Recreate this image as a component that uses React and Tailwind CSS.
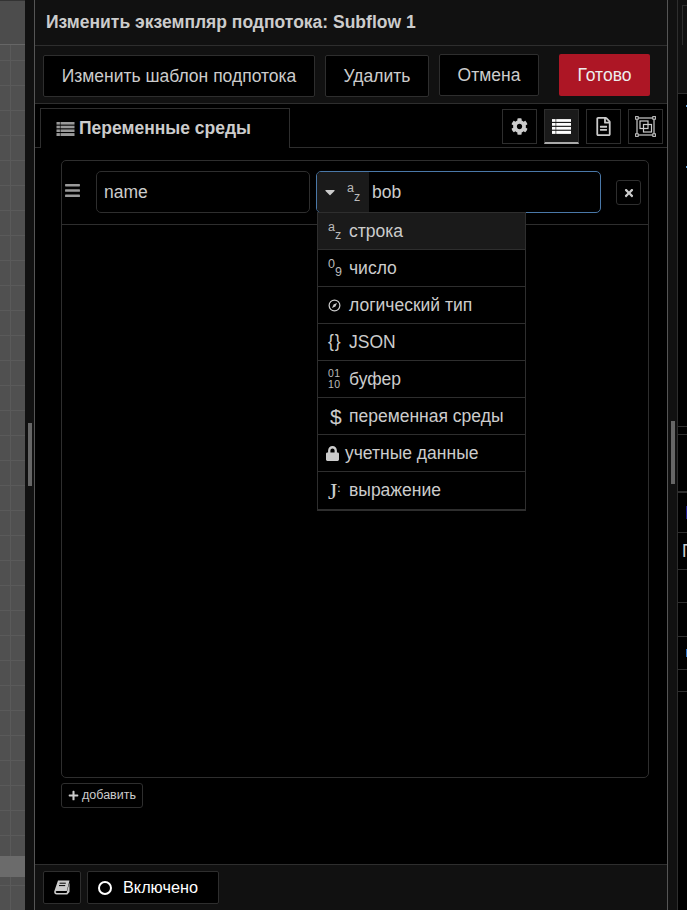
import React from "react";
import { FaCog, FaRegFileAlt, FaPlus, FaTimes, FaLock, FaBars, FaCaretDown } from "react-icons/fa";

const ListIcon = ({ className }) => (
  <svg viewBox="0 0 18 14" className={className} fill="currentColor">
    <rect x="0" y="0" width="3.4" height="2.6" /><rect x="4" y="0" width="14" height="2.6" />
    <rect x="0" y="3.7" width="3.4" height="2.6" /><rect x="4" y="3.7" width="14" height="2.6" />
    <rect x="0" y="7.4" width="3.4" height="2.6" /><rect x="4" y="7.4" width="14" height="2.6" />
    <rect x="0" y="11.1" width="3.4" height="2.9" /><rect x="4" y="11.1" width="14" height="2.9" />
  </svg>
);

const GroupIcon = () => (
  <svg viewBox="0 0 21 21" className="w-[21px] h-[21px] text-[#cccccc]" fill="none" stroke="currentColor" strokeWidth="1.2">
    <rect x="2" y="2" width="17" height="17" />
    <rect x="5" y="5" width="8" height="7.5" />
    <rect x="8.5" y="8.5" width="8" height="7.5" />
    <g fill="#000000" strokeWidth="1">
      <rect x="0.6" y="0.6" width="2.6" height="2.6" /><rect x="17.8" y="0.6" width="2.6" height="2.6" />
      <rect x="0.6" y="17.8" width="2.6" height="2.6" /><rect x="17.8" y="17.8" width="2.6" height="2.6" />
    </g>
  </svg>
);

const BookIcon = () => (
  <svg viewBox="0 0 16 15" className="w-4 h-[15px] text-[#cccccc]">
    <path d="M4 0.5 H15.5 L12.8 11 H2.8 Q1.6 11 1.7 12 Q1.8 13 3 13 H12.6 L15.5 2.5 V12 L13.3 14.5 H2.8 Q0 14.5 0.2 11.5 Z" fill="currentColor" />
    <path d="M5.6 3.2 H11.8 M5 5.6 H11.2" stroke="#000000" strokeWidth="1" />
  </svg>
);

const Az = ({ a, z, dy = "top-[8px]" }) => (
  <span className="relative block w-[15px] h-[20px] text-[#bbbbbb] text-[12.5px] leading-none">
    <span className="absolute left-0 top-0">{a}</span>
    <span className={`absolute left-[7px] ${dy}`}>{z}</span>
  </span>
);

const BoolIcon = () => (
  <svg viewBox="0 0 14 14" className="w-[13px] h-[13px] text-[#cccccc]" fill="none" stroke="currentColor">
    <circle cx="7" cy="7" r="5.8" strokeWidth="1.3" />
    <path d="M4.3 9.7 L6 6 L9.7 4.3 L8 8 Z" fill="currentColor" stroke="none" />
  </svg>
);

const Row = ({ icon, label, active, tight }) => (
  <div className={`h-[37px] flex items-center border-b border-[#2e2e2e] ${active ? "bg-[#1a1a1a]" : ""} ${tight ? "pl-2 gap-[6px]" : "pl-[10px]"}`}>
    <span className={tight ? "flex w-[13px] justify-center" : "flex w-[21px] shrink-0 items-center"}>{icon}</span>
    <span className="text-[#cccccc]">{label}</span>
  </div>
);

const TopBtn = ({ children, className }) => (
  <button className={`h-[42px] rounded-[2px] flex items-center justify-center ${className}`}>{children}</button>
);

const IconTab = ({ children, active }) => (
  <div className={`w-[35px] h-[35px] flex items-center justify-center border border-[#2e2e2e] ${active ? "bg-[#1a1a1a] border-b-2 border-b-[#aaaaaa]" : "bg-black"}`}>{children}</div>
);

const SideRow = ({ h, children, className = "" }) => (
  <div className={`shrink-0 border-b border-[#2e2e2e] overflow-hidden ${className}`} style={{ height: h }}>{children}</div>
);

export default function App() {
  return (
    <div className="flex h-[910px] w-[687px] overflow-hidden bg-black text-[17.5px] font-['Liberation_Sans',Arial,sans-serif]">
      {/* canvas */}
      <div className="w-[25px] shrink-0 flex flex-col bg-[#505050] bg-[linear-gradient(#5a5a5a_1px,transparent_1px),linear-gradient(90deg,#5a5a5a_1px,transparent_1px)] bg-[size:25px_25px] bg-[position:10px_10px]">
        <div className="h-[45px] shrink-0 bg-[#4c4c4c] border-t border-[#333333] border-b border-b-[#666666]" />
        <div className="h-[811px] shrink-0" />
        <div className="h-[21px] shrink-0 bg-[#6b6b6b]" />
      </div>
      {/* left separator */}
      <div className="w-[9px] shrink-0 bg-[#111111] flex items-start justify-center pt-[423px]">
        <div className="w-1 h-[63px] bg-[#666666]" />
      </div>

      {/* tray */}
      <div className="w-[634px] shrink-0 flex flex-col border-x border-[#555555] bg-black">
        <div className="h-[46px] shrink-0 bg-[#111111] border-b border-[#2e2e2e] pl-[11px] flex items-center font-bold text-[#cccccc]">
          Изменить экземпляр подпотока: Subflow 1
        </div>
        <div className="h-[58px] shrink-0 bg-[#111111] border-b border-[#2e2e2e] pl-2 pt-2 flex items-start text-[#cccccc]">
          <TopBtn className="w-[272px] mt-px bg-black border border-[#2e2e2e]">Изменить шаблон подпотока</TopBtn>
          <TopBtn className="w-[104px] mt-px ml-[10px] bg-black border border-[#2e2e2e]">Удалить</TopBtn>
          <TopBtn className="w-[100px] ml-[10px] bg-black border border-[#2e2e2e]">Отмена</TopBtn>
          <TopBtn className="w-[91px] ml-5 bg-[#ad1625] text-[#eeeeee]">Готово</TopBtn>
        </div>
        <div className="h-[44px] shrink-0 border-b border-[#2e2e2e] flex items-end justify-between pl-[5px] pr-[4px] bg-black">
          <div className="w-[250px] h-[40px] -mb-px bg-black border border-b-0 border-[#2e2e2e] flex items-center pl-[15px] gap-[4px] font-bold text-[#cccccc]">
            <ListIcon className="w-[19px] h-[14px] text-[#999999]" />
            Переменные среды
          </div>
          <div className="flex gap-[7px] self-start pt-[5px]">
            <IconTab><FaCog className="w-[17px] h-[17px] text-[#cccccc]" /></IconTab>
            <IconTab active><ListIcon className="w-[19px] h-[15px] text-white" /></IconTab>
            <IconTab><FaRegFileAlt className="w-[15px] h-[19px] text-[#cccccc]" /></IconTab>
            <IconTab><GroupIcon /></IconTab>
          </div>
        </div>

        <div className="flex-1 min-h-0 flex flex-col pl-[26px] pt-[12px]">
          <div className="w-[588px] h-[618px] shrink-0 border border-[#2e2e2e] rounded-[5px] flex flex-col">
            <div className="relative h-[64px] shrink-0 border-b border-[#2e2e2e] flex items-center pl-[2px]">
              <FaBars className="w-[17px] h-[17px] text-[#999999] mb-[4px]" />
              <div className="ml-[15px] mb-[2px] w-[214px] h-[42px] rounded-[5px] border border-[#2e2e2e] flex items-center pl-[7px] pt-px text-[#cccccc]">name</div>
              <div className="ml-[6px] mb-[2px] w-[285px] h-[42px] rounded-[5px] border border-[#4a78a8] flex items-center overflow-hidden text-[#cccccc]">
                <div className="w-[52px] h-full bg-[#1a1a1a] flex items-center pl-[5px] gap-[9px] shrink-0">
                  <FaCaretDown className="w-[16px] h-[16px] text-[#cccccc]" />
                  <Az a="a" z="z" dy="top-[9px]" />
                </div>
                <span className="ml-[3px] pt-px">bob</span>
              </div>
              <button className="ml-[15px] w-[25px] h-[25px] rounded-[3px] border border-[#2e2e2e] bg-black flex items-center justify-center">
                <FaTimes className="w-[12px] h-[12px] text-[#cccccc]" />
              </button>
              {/* dropdown menu */}
              <div className="absolute left-[255px] top-[51px] z-10 w-[209px] bg-black border border-[#2e2e2e] border-b-2">
                <Row active icon={<Az a="a" z="z" />} label="строка" />
                <Row icon={<Az a="0" z="9" />} label="число" />
                <Row icon={<BoolIcon />} label="логический тип" />
                <Row icon={<span className="text-[#cccccc] leading-none tracking-[1px]">{"{}"}</span>} label="JSON" />
                <Row icon={<span className="block w-[14px] text-[#bbbbbb] text-[10.5px] leading-[11px] tracking-[0.5px]"><span className="block">01</span><span className="block">10</span></span>} label="буфер" />
                <Row icon={<span className="text-[#cccccc] text-[21px] leading-none pl-[2px]">$</span>} label="переменная среды" />
                <Row tight icon={<FaLock className="w-[13px] h-[15px] text-[#cccccc]" />} label="учетные данные" />
                <div className="h-[37px] flex items-center pl-[10px]">
                  <span className="flex w-[21px] shrink-0 items-center text-[#cccccc] text-[24px] leading-none font-['Liberation_Serif',serif]">J<span className="text-[12px] -mt-[6px]">:</span></span>
                  <span className="text-[#cccccc]">выражение</span>
                </div>
              </div>
            </div>
          </div>
          <button className="mt-[5px] w-[82px] h-[25px] rounded-[3px] border border-[#2e2e2e] bg-black flex items-center justify-center gap-[3px] text-[12.5px] text-[#cccccc]">
            <FaPlus className="w-[11px] h-[11px] text-[#cccccc]" />добавить
          </button>
        </div>

        <div className="h-[46px] shrink-0 bg-[#111111] border-t border-[#2e2e2e] flex items-start pl-2 pt-[6px] gap-[6px]">
          <div className="w-[38px] h-[33px] rounded-[2px] bg-black border border-[#2e2e2e] flex items-center justify-center">
            <BookIcon />
          </div>
          <div className="w-[132px] h-[33px] rounded-[2px] bg-black border border-[#2e2e2e] flex items-center pl-[10px] gap-[11px] text-[16.25px] text-white">
            <span className="w-[14px] h-[14px] rounded-full border-2 border-white" />Включено
          </div>
        </div>
      </div>

      {/* right separator */}
      <div className="w-[9px] shrink-0 bg-[#111111] flex items-start justify-center pt-[421px]">
        <div className="w-1 h-[63px] bg-[#666666]" />
      </div>

      {/* sidebar */}
      <div className="flex-1 min-w-0 flex flex-col border-l border-[#2e2e2e] bg-black">
        <div className="h-[45px] shrink-0 bg-[#111111] pl-[4px] pt-[5px]"><div className="h-full border-l border-t border-[#2e2e2e]" /></div>
        <div className="h-[49px] shrink-0 bg-[#111111] border-b border-[#2e2e2e]" />
        <SideRow h={333}>
          <div className="flex flex-col gap-[59px] pl-[8px] pt-[11px]">
            <div className="w-[2px] h-[2px] bg-[#5b9bd5]" />
            <div className="w-[2px] h-[2px] bg-[#5b9bd5]" />
          </div>
        </SideRow>
        <SideRow h={8} />
        <SideRow h={58} className="border-b-2" />
        <SideRow h={40}><div className="ml-[8px] mt-[13px] w-[2px] h-[13px] bg-[#1a1a8a]" /></SideRow>
        <SideRow h={37}><span className="ml-[4px] block w-[10px] leading-[37px] text-[#cccccc]">П</span></SideRow>
        <SideRow h={33} />
        <SideRow h={34} />
        <SideRow h={33}><div className="ml-[8px] mt-[12px] w-[2px] h-[8px] bg-[#2a6fc0]" /></SideRow>
        <SideRow h={22} />
      </div>
    </div>
  );
}
